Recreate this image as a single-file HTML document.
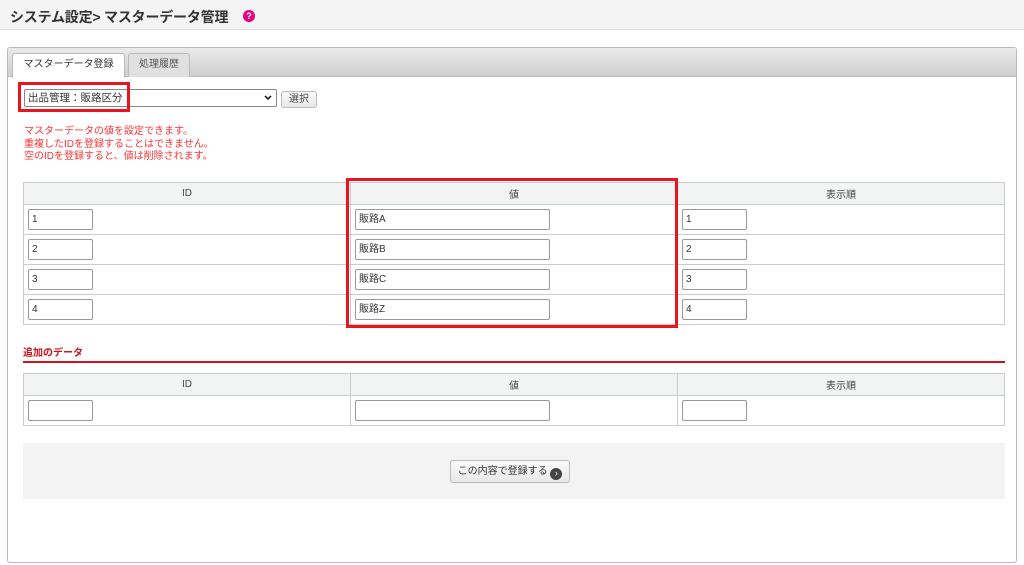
<!DOCTYPE html>
<html><head><meta charset="utf-8"><style>
*{box-sizing:border-box;margin:0;padding:0}
body{width:1024px;height:565px;background:#fff;font-family:"Liberation Sans","Noto Sans CJK JP",sans-serif;position:relative;overflow:hidden;color:#333}
.a{position:absolute}
.hdr{left:0;top:0;width:1024px;height:30px;background:#f4f4f4;border-bottom:1px solid #ddd}
.ttl{left:10px;top:7px;font-size:14px;font-weight:bold;color:#333;letter-spacing:-0.2px}
.help{left:243px;top:10px;width:12px;height:12px;border-radius:50%;background:#e4007f;color:#fff;font-size:9px;font-weight:bold;text-align:center;line-height:12px}
.panel{left:7px;top:47px;width:1010px;height:516px;border:1px solid #bbb;border-radius:3px}
.tabbar{left:8px;top:48px;width:1008px;height:29px;background:linear-gradient(#eaeaea,#cfcfcf);border-bottom:1px solid #bbb}
.tab{font-size:10px;text-align:center;line-height:22px;border:1px solid #bbb;border-bottom:none;border-radius:3px 3px 0 0}
.sel{left:24px;top:89px;width:253px;height:18px;border:1px solid #888;border-radius:2px;font-size:10.5px;padding-left:3px;line-height:16px;background:#fff}
.btn{border:1px solid #bbb;border-radius:3px;background:linear-gradient(#fafafa,#e8e8e8);font-size:10px;text-align:center;color:#444}
.msg{left:24px;top:126px;font-size:10px;line-height:12.5px;color:#f33}
table{position:absolute;left:23px;width:982px;border-collapse:collapse;font-size:10px}
td,th{border:1px solid #ccc;width:327px}
th{background:#f2f3f3;font-weight:normal;height:22px;color:#444}
td{height:30px;padding-left:4px}
.in{display:block;height:21px;border:1px solid #999;border-radius:2px;font-size:10px;padding-left:3px;line-height:19px;background:#fff}
.w1{width:65px}.w2{width:195px}
</style></head><body>
<div class="a hdr"></div>
<div class="a ttl">システム設定&gt; マスターデータ管理</div>
<div class="a help">?</div>
<div class="a panel"></div>
<div class="a tabbar"></div>
<div class="a tab" style="left:12px;top:53px;width:113px;height:25px;background:#fff">マスターデータ登録</div>
<div class="a tab" style="left:128px;top:53px;width:62px;height:24px;background:#e0e0e0;color:#555">処理履歴</div>
<div class="a sel">出品管理：販路区分<svg style="position:absolute;right:4px;top:5px" width="8" height="6" viewBox="0 0 8 6"><path d="M1 1l3 3 3-3" stroke="#222" stroke-width="1.6" fill="none"/></svg></div>
<div class="a" style="left:18px;top:82px;width:112px;height:30px;border:3px solid #e8141e"></div>
<div class="a btn" style="left:281px;top:91px;width:36px;height:17px;line-height:15px">選択</div>
<div class="a msg">マスターデータの値を設定できます。<br>重複したIDを登録することはできません。<br>空のIDを登録すると、値は削除されます。</div>
<table style="top:182px">
<tr><th>ID</th><th>値</th><th>表示順</th></tr>
<tr><td><span class="in w1">1</span></td><td><span class="in w2">販路A</span></td><td><span class="in w1">1</span></td></tr>
<tr><td><span class="in w1">2</span></td><td><span class="in w2">販路B</span></td><td><span class="in w1">2</span></td></tr>
<tr><td><span class="in w1">3</span></td><td><span class="in w2">販路C</span></td><td><span class="in w1">3</span></td></tr>
<tr><td><span class="in w1">4</span></td><td><span class="in w2">販路Z</span></td><td><span class="in w1">4</span></td></tr>
</table>
<div class="a" style="left:346px;top:178px;width:332px;height:150px;border:3px solid #e8141e"></div>
<div class="a" style="left:23px;top:344px;font-size:10px;font-weight:bold;color:#d0121b">追加のデータ</div>
<div class="a" style="left:23px;top:361px;width:982px;height:2px;background:#d0121b"></div>
<table style="top:373px">
<tr><th>ID</th><th>値</th><th>表示順</th></tr>
<tr><td><span class="in w1"></span></td><td><span class="in w2"></span></td><td><span class="in w1"></span></td></tr>
</table>
<div class="a" style="left:23px;top:443px;width:982px;height:56px;background:#f3f3f3"></div>
<div class="a btn" style="left:450px;top:460px;width:120px;height:23px;line-height:21px;color:#333">この内容で登録する <span style="display:inline-block;width:12px;height:12px;border-radius:50%;background:#444;color:#fff;font-size:9px;line-height:11px;vertical-align:-2px">&#8250;</span></div>
</body></html>
